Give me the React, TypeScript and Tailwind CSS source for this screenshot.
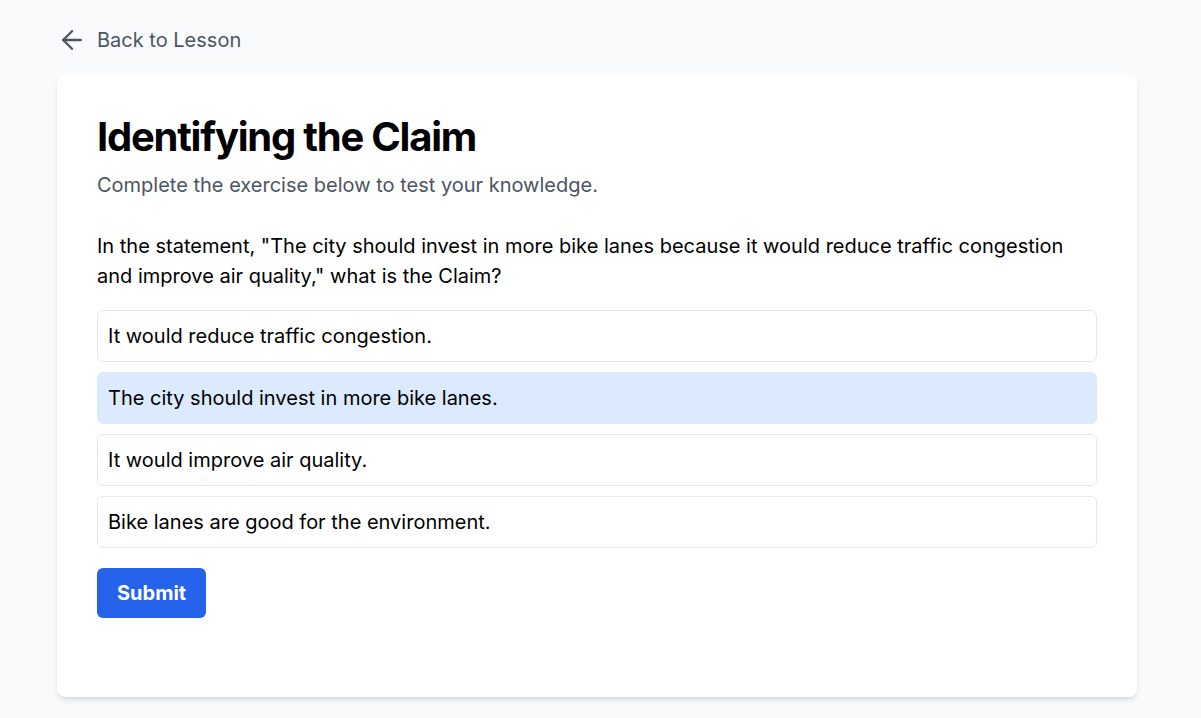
import { ArrowLeft } from 'lucide-react';

const options = [
  'It would reduce traffic congestion.',
  'The city should invest in more bike lanes.',
  'It would improve air quality.',
  'Bike lanes are good for the environment.',
];

export default function App() {
  const selected = 1;

  return (
    <div className="min-h-screen bg-gray-50 pl-[57px] pr-[64px] pt-[25px] pb-5 font-['Inter',sans-serif]">
      {/* Back link */}
      <button className="flex items-center gap-2.5 h-[30px] text-xl text-[#4b5563]">
        <ArrowLeft size={30} strokeWidth={1.9} />
        <span>Back to Lesson</span>
      </button>

      {/* Card */}
      <div className="mt-5 w-[1080px] bg-white rounded-lg shadow-md px-10 pt-10 pb-[79px]">
        <h1 className="text-[40px] leading-[44px] font-bold tracking-[-0.031em] text-black">Identifying the Claim</h1>
        <p className="mt-3 text-xl leading-7 text-[#4b5563]">Complete the exercise below to test your knowledge.</p>

        <p className="mt-8 mb-[19px] text-xl leading-[30px] text-black">
          In the statement, "The city should invest in more bike lanes because it would reduce traffic congestion
          and improve air quality," what is the Claim?
        </p>

        <div className="flex flex-col gap-2.5">
          {options.map((o, i) => (
            <button
              key={o}
              className={`w-full text-left px-2.5 py-[11px] rounded-md border text-xl leading-7 text-black ${
                i === selected ? 'bg-[#dbeafe] border-[#dbeafe]' : 'bg-white border-[#e5e7eb]'
              }`}
            >
              {o}
            </button>
          ))}
        </div>

        <button className="mt-5 px-5 py-[11px] rounded-md bg-[#2563eb] text-white text-xl leading-7 font-bold">
          Submit
        </button>
      </div>
    </div>
  );
}
